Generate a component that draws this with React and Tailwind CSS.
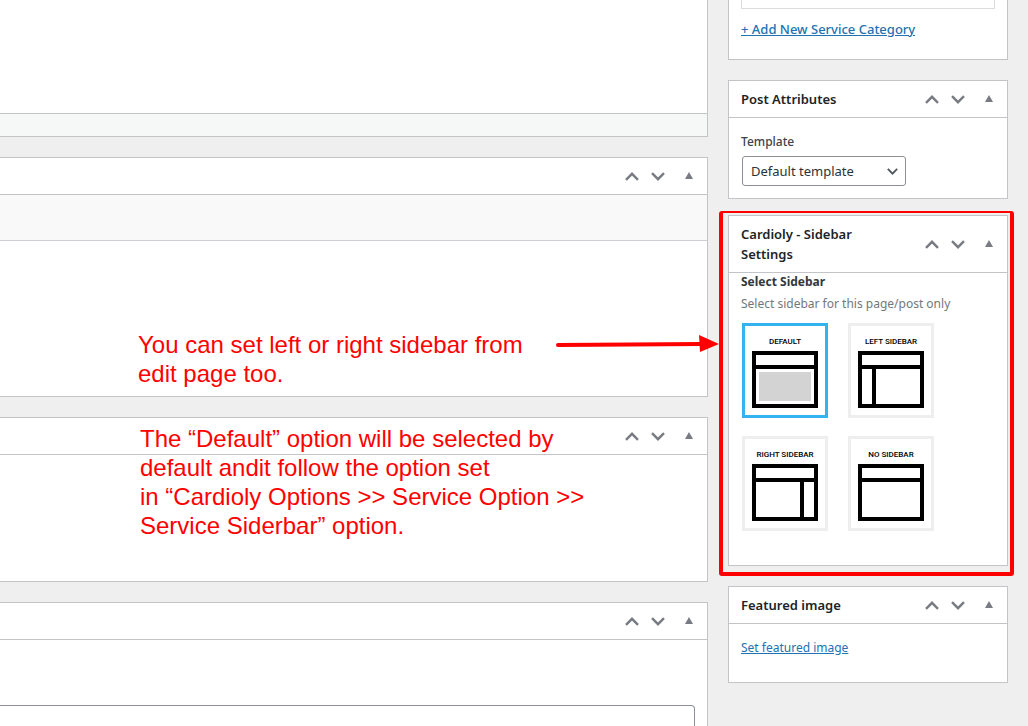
import { useState } from 'react'

const layouts = [
  { value: 'default', label: 'DEFAULT' },
  { value: 'left', label: 'LEFT SIDEBAR' },
  { value: 'right', label: 'RIGHT SIDEBAR' },
  { value: 'none', label: 'NO SIDEBAR' },
]

function Chevron({ down, className }) {
  return (
    <svg viewBox="0 0 14 9" fill="none" stroke="currentColor" strokeWidth="2.4" className={className} aria-hidden="true">
      <path d={down ? 'M1 1.2 7 7.2 13 1.2' : 'M1 7.8 7 1.8 13 7.8'} />
    </svg>
  )
}

function OrderActions() {
  return (
    <div className="flex shrink-0 items-center self-stretch text-[#787c82]">
      <button type="button" aria-label="Move up" className="flex h-9 w-[26px] items-center justify-center">
        <Chevron className="h-[9px] w-3.5" />
      </button>
      <button type="button" aria-label="Move down" className="flex h-9 w-[26px] items-center justify-center">
        <Chevron down className="h-[9px] w-3.5" />
      </button>
      <button type="button" aria-label="Toggle panel" className="flex h-9 w-9 items-center justify-center pb-0.5">
        <svg viewBox="0 0 8 7" fill="currentColor" className="h-[7px] w-2" aria-hidden="true">
          <path d="M4 0 8 7H0z" />
        </svg>
      </button>
    </div>
  )
}

// Metabox in the right column
function Postbox({ title, className = '', children }) {
  return (
    <section className={`relative border border-[#c3c4c7] bg-white ${className}`}>
      <div className="flex items-center justify-between border-b border-[#c3c4c7]">
        <h2 className="py-2 pl-3 text-[13px] leading-5 font-semibold text-[#1d2327]">{title}</h2>
        <OrderActions />
      </div>
      {children}
    </section>
  )
}

// Metabox in the main column, its left edge runs off screen
function WideBox({ className = '', children }) {
  return (
    <section className={`relative border border-l-0 border-[#c3c4c7] bg-white ${className}`}>
      <div className="flex h-[37px] items-center justify-end border-b border-[#c3c4c7]">
        <OrderActions />
      </div>
      {children}
    </section>
  )
}

function LayoutIcon({ type }) {
  return (
    <svg viewBox="0 0 66 57" className="h-[57px] w-[66px]" aria-hidden="true">
      <path d="M2 2h62v53H2zM2 16h62" fill="none" stroke="#000" strokeWidth="4" />
      {type === 'default' && <path d="M7 21h52v29H7z" fill="#d3d3d3" />}
      {type === 'left' && <path d="M14 16h4v39h-4z" />}
      {type === 'right' && <path d="M48 16h4v39h-4z" />}
    </svg>
  )
}

function SidebarPicker() {
  const [selected, setSelected] = useState('default')

  return (
    <fieldset className="px-3 pb-[34px]">
      <legend className="text-[12px] leading-[18px] font-bold text-[#32373c]">Select Sidebar</legend>
      <p className="mt-1 text-[12px] leading-[18px] text-[#72777c]">Select sidebar for this page/post only</p>
      <div className="mt-2.5 ml-px flex flex-wrap gap-x-5 gap-y-[18px]">
        {layouts.map((item) => (
          <label
            key={item.value}
            className={`flex h-[95px] w-[86px] cursor-pointer flex-col items-center border-3 pt-[11px] ${
              selected === item.value ? 'border-[#33b3f0]' : 'border-[#eee]'
            }`}
          >
            <input
              type="radio"
              name="sidebar"
              value={item.value}
              checked={selected === item.value}
              onChange={() => setSelected(item.value)}
              className="sr-only"
            />
            <span className="h-3.5 font-[Roboto,sans-serif] text-[8px] leading-[10px] font-medium whitespace-nowrap text-black">
              {item.label}
            </span>
            <LayoutIcon type={item.value} />
          </label>
        ))}
      </div>
    </fieldset>
  )
}

function Note({ className, children }) {
  return (
    <p className={`absolute z-10 font-['Liberation_Sans',Arial,sans-serif] text-[24px] leading-[29px] whitespace-nowrap text-[#f00] ${className}`}>
      {children}
    </p>
  )
}

export default function App() {
  return (
    <div className="flex h-screen gap-5 overflow-hidden bg-[#efefef] pr-5 font-['Noto_Sans','Open_Sans',sans-serif]">
      <main className="flex min-w-0 flex-1 flex-col gap-5">
        <section className="border-r border-b border-[#c3c4c7] bg-white">
          <div className="h-[113px]" />
          <div className="h-[23px] border-t border-[#c3c4c7] bg-[#f6f7f7]" />
        </section>

        <WideBox>
          <div className="h-[46px] border-b border-[#ccd0d4] bg-[#f9f9f9]" />
          <div className="h-[155px]" />
          <Note className="top-[172px] left-[138px]">
            You can set left or right sidebar from
            <br />
            edit page too.
          </Note>
        </WideBox>

        <WideBox>
          <div className="h-[126px]" />
          <Note className="top-1.5 left-[140px]">
            The “Default” option will be selected by
            <br />
            default andit follow the option set
            <br />
            in “Cardioly Options &gt;&gt; Service Option &gt;&gt;
            <br />
            Service Siderbar” option.
          </Note>
        </WideBox>

        <WideBox className="flex-1 border-b-0">
          <div className="pt-[65px] pr-3">
            <textarea
              aria-label="Excerpt"
              className="block h-20 w-full resize-none rounded-r border border-l-0 border-[#8c8f94] bg-white p-2 text-[13px] outline-none"
            />
          </div>
        </WideBox>
      </main>

      <aside className="w-[280px] shrink-0">
        <section className="border border-t-0 border-[#c3c4c7] bg-white px-3 pb-5">
          <div className="h-[9px] border border-t-0 border-[#dcdcde]" />
          <a href="#add-category" className="mt-2.5 block text-[13px] leading-5 font-medium text-[#2271b1] underline">
            + Add New Service Category
          </a>
        </section>

        <Postbox title="Post Attributes" className="mt-5">
          <div className="px-3 pt-3.5 pb-3">
            <label htmlFor="template" className="block text-[12px] leading-5 font-medium text-[#3c434a]">
              Template
            </label>
            <div className="relative mt-1 ml-px w-[164px]">
              <select
                id="template"
                className="block h-[30px] w-full appearance-none rounded-[3px] border border-[#8c8f94] bg-white pr-6 pl-2 text-[13px] leading-7 text-[#2c3338]"
              >
                <option>Default template</option>
              </select>
              <Chevron down className="pointer-events-none absolute top-3 right-2 h-[7px] w-[11px] text-[#50575e]" />
            </div>
          </div>
        </Postbox>

        <Postbox title={<>Cardioly - Sidebar<br />Settings</>} className="mt-4">
          <SidebarPicker />
          <div className="pointer-events-none absolute -top-[5px] -right-[7px] -bottom-[11px] -left-[10px] z-10 rounded-[3px] border-4 border-t-2 border-[#f00]" />
          <svg
            viewBox="0 0 164 18"
            className="absolute top-[119px] right-full z-10 mr-[9px] h-[18px] w-[164px] text-[#f00]"
            aria-hidden="true"
          >
            <path d="M2 10 146 9" stroke="currentColor" strokeWidth="4" strokeLinecap="round" />
            <path d="M143 0 163 9 144 17z" fill="currentColor" />
          </svg>
        </Postbox>

        <Postbox title="Featured image" className="mt-5">
          <div className="flex px-3 pt-3.5 pb-6">
            <a href="#featured-image" className="text-[12px] leading-5 text-[#2271b1] underline">
              Set featured image
            </a>
          </div>
        </Postbox>
      </aside>
    </div>
  )
}
